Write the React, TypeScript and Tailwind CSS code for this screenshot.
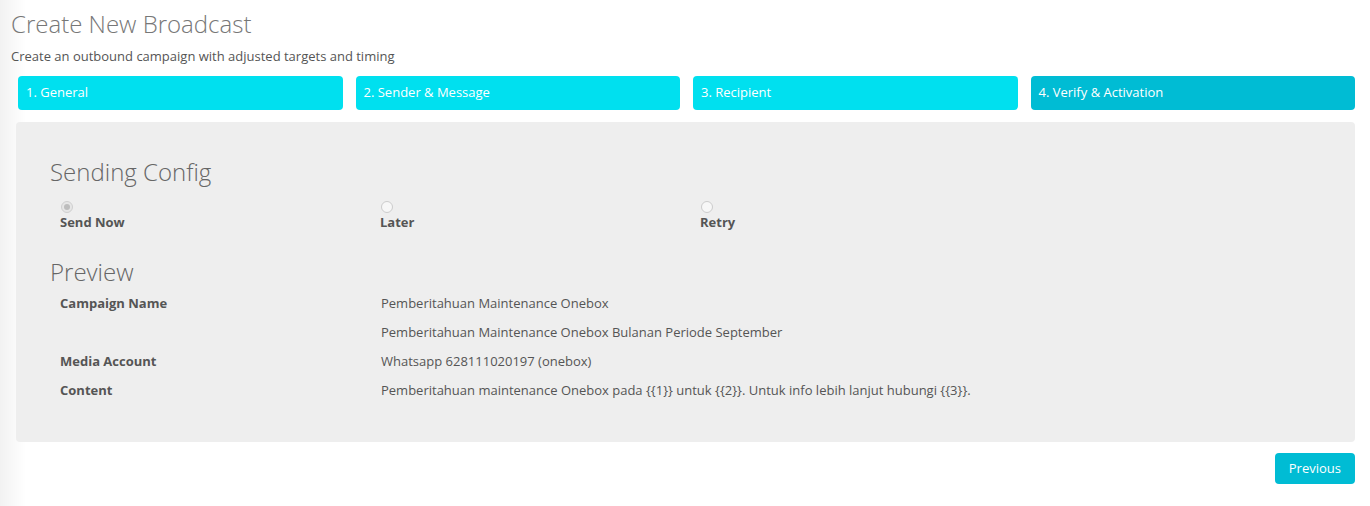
import { useState } from "react";

const steps = ["1. General", "2. Sender & Message", "3. Recipient", "4. Verify & Activation"];

const sendOptions = ["Send Now", "Later", "Retry"];

const preview = [
  { label: "Campaign Name", value: "Pemberitahuan Maintenance Onebox" },
  { label: "", value: "Pemberitahuan Maintenance Onebox Bulanan Periode September" },
  { label: "Media Account", value: "Whatsapp 628111020197 (onebox)" },
  { label: "Content", value: "Pemberitahuan maintenance Onebox pada {{1}} untuk {{2}}. Untuk info lebih lanjut hubungi {{3}}." },
];

export default function App() {
  const [active] = useState(3);
  const [sendType] = useState("Send Now");

  return (
    <div
      className="min-h-[506px] bg-[linear-gradient(to_right,#f2f2f2,#ffffff_26px)] font-['Open_Sans',sans-serif] text-[#555]"
    >
      <div className="pl-[11px] pr-[15px] pt-[9px]">
        <h1 className="text-[24px] font-light leading-[30px] text-[#777]">Create New Broadcast</h1>
        <p className="mt-[8px] text-[13px] leading-[18px] text-[#555]">
          Create an outbound campaign with adjusted targets and timing
        </p>

        {/* Wizard steps */}
        <div className="mt-[11px] ml-[7px] grid grid-cols-4 gap-[13px]">
          {steps.map((s, i) => (
            <div
              key={s}
              className={
                "flex h-[34px] items-center rounded-[4px] px-[8px] text-[13px] text-white " +
                (i === active ? "bg-[#00bcd4]" : "bg-[#00e0ef]")
              }
            >
              {s}
            </div>
          ))}
        </div>

        <div className="mt-[12px] ml-[5px] rounded-[4px] bg-[#eeeeee] px-[34px] pt-[34px] pb-[38px]">
          <h2 className="text-[24px] font-light leading-[32px] text-[#666]">Sending Config</h2>
          <div className="mt-[13px] grid grid-cols-[320px_320px_320px] pl-[10px]">
            {sendOptions.map((o) => (
              <label key={o} className="flex flex-col items-start">
                <span
                  className={
                    "ml-[1px] flex h-[12px] w-[12px] items-center justify-center rounded-full border " +
                    (sendType === o ? "border-[#cfcfcf] bg-[#e6e6e6]" : "border-[#cccccc] bg-[#f7f7f7]")
                  }
                >
                  {sendType === o && <span className="h-[6px] w-[6px] rounded-full bg-[#bdbdbd]" />}
                </span>
                <span className="text-[13px] font-bold leading-[18px] text-[#555]">{o}</span>
              </label>
            ))}
          </div>

          <h2 className="mt-[25px] text-[24px] font-light leading-[32px] text-[#666]">Preview</h2>
          <div className="pl-[10px]">
            {preview.map((r, i) => (
              <div key={i} className="grid h-[29px] grid-cols-[321px_1fr] items-center text-[13px] leading-[18px]">
                <span className="font-bold text-[#555]">{r.label}</span>
                <span className="text-[#555]">{r.value}</span>
              </div>
            ))}
          </div>
        </div>

        <div className="mt-[11px] flex justify-end">
          <button className="h-[31px] rounded-[4px] bg-[#00bcd4] px-[14px] text-[13px] text-white">
            Previous
          </button>
        </div>
      </div>
    </div>
  );
}
